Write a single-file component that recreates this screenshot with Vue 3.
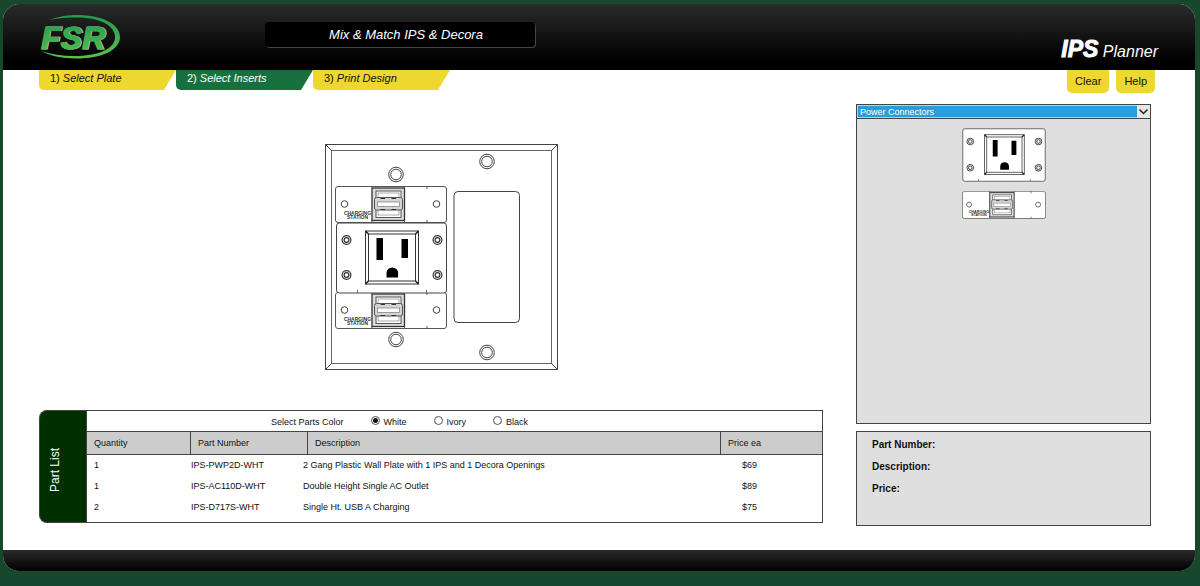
<script setup>
import { ref } from 'vue'

const steps = [
  { number: '1)', label: 'Select Plate' },
  { number: '2)', label: 'Select Inserts' },
  { number: '3)', label: 'Print Design' },
]
const activeStep = ref(1)

const colors = ['White', 'Ivory', 'Black']
const color = ref('White')

const category = ref('Power Connectors')

const parts = [
  { qty: 1, number: 'IPS-PWP2D-WHT', description: '2 Gang Plastic Wall Plate with 1 IPS and 1 Decora Openings', price: '$69' },
  { qty: 1, number: 'IPS-AC110D-WHT', description: 'Double Height Single AC Outlet', price: '$89' },
  { qty: 2, number: 'IPS-D717S-WHT', description: 'Single Ht. USB A Charging', price: '$75' },
]

const plateScrews = [
  [396, 174.5],
  [487, 161.5],
  [396, 339.5],
  [487, 352.5],
]
const outletScrews = [
  [11, 18],
  [102, 18],
  [11, 53],
  [102, 53],
]
</script>

<template>
  <div class="shell">
    <!-- shared line drawings of the inserts -->
    <svg class="defs" aria-hidden="true">
      <defs>
        <symbol id="outlet" viewBox="0 0 112 72">
          <rect x="1" y="1" width="110" height="70" rx="3" fill="#fff" stroke="#444" />
          <g v-for="([x, y], i) in outletScrews" :key="i" fill="none" stroke="#333" stroke-width="1.200">
            <circle :cx="x" :cy="y" r="4.400" />
            <circle :cx="x" :cy="y" r="2.400" />
          </g>
          <rect x="30" y="9" width="53" height="53" fill="none" stroke="#333" />
          <rect x="33" y="12" width="47" height="47" fill="none" stroke="#333" />
          <path d="M30 9l3 3M83 9l-3 3M30 62l3-3M83 62l-3-3" stroke="#222" stroke-width="1.600" />
          <rect x="41" y="16" width="6.500" height="22" />
          <rect x="66" y="17" width="6.500" height="19" />
          <path d="M51 55.500v-4.500a5.800 5.500 0 0 1 11.600 0v4.500z" />
          <path d="M22 68v3M91 68v3" stroke="#666" />
        </symbol>
        <symbol id="usb" viewBox="0 0 112 37">
          <rect x=".5" y=".5" width="111" height="36" rx="2.500" fill="#fff" stroke="#555" />
          <circle cx="9.500" cy="18" r="3.300" fill="none" stroke="#444" />
          <circle cx="101.500" cy="18" r="3.300" fill="none" stroke="#444" />
          <rect x="37" y="2" width="32.500" height="32.500" fill="#ddd" stroke="#333" stroke-width="1.300" />
          <rect x="41" y="5" width="25" height="26.500" fill="#fff" stroke="#555" />
          <rect x="43" y="7" width="21" height="22" fill="#fff" stroke="#888" stroke-width=".700" />
          <rect x="39.500" y="11.500" width="28" height="12.500" rx="2" fill="#d4d4d4" stroke="#555" />
          <rect x="42.500" y="16" width="22" height="4.500" fill="#fff" stroke="#888" stroke-width=".800" />
          <path d="M45.500 12.500h4.500M56.500 12.500h4.500M45.500 23.500h4.500M56.500 23.500h4.500" stroke="#333" />
          <path d="M92 0v3M92 34v3M37 0v2M69.500 0v2M37 34v3M69.500 34v3" stroke="#555" />
          <text x="22.500" y="28.500" class="engraving">CHARGING</text>
          <text x="22.500" y="33" class="engraving">STATION</text>
        </symbol>
      </defs>
    </svg>

    <header class="header">
      <svg class="logo" viewBox="38 14 84 46" role="img" aria-label="FSR">
        <defs>
          <linearGradient id="brand" x1="0" y1="0" x2="0" y2="1">
            <stop offset="0" stop-color="#229b50" />
            <stop offset="1" stop-color="#5dbd4b" />
          </linearGradient>
        </defs>
        <path
          fill="url(#brand)"
          d="M49 20C60 16 69 15 77 15C102 15 120 24 120 37C120 50 102 58.500 76 58.500C61 58.500 49 55.500 41 51C52 54.500 62 56 74 56C98 56 115 49 115 37C115 25 99 17.500 76 17.500C67 17.500 58 18 49 20Z"
        />
        <text x="42" y="49" class="logo-shadow">FSR</text>
        <text x="41" y="49" class="logo-text">FSR</text>
      </svg>
      <div class="title">Mix &amp; Match IPS &amp; Decora</div>
      <div class="product"><strong>IPS</strong> Planner</div>
    </header>

    <main class="main">
      <div class="toolbar">
        <nav class="steps">
          <button
            v-for="(step, i) in steps"
            :key="step.label"
            type="button"
            class="step"
            :class="{ active: i === activeStep }"
            @click="activeStep = i"
          >{{ step.number }} <em>{{ step.label }}</em></button>
        </nav>
        <div class="actions">
          <button type="button" class="action">Clear</button>
          <button type="button" class="action">Help</button>
        </div>
      </div>

      <div class="content">
        <section class="design">
          <div class="canvas">
            <svg class="plate" viewBox="325 143 234 228" role="img" aria-label="Wall plate">
              <g fill="none" stroke="#444">
                <rect x="325.500" y="144.500" width="232" height="225" />
                <rect x="331.500" y="150.500" width="220" height="213" stroke="#666" />
                <path d="M325.500 144.500l6 6M557.500 144.500l-6 6M325.500 369.500l6-6M557.500 369.500l-6-6" />
                <rect x="454" y="191.500" width="65.500" height="131" rx="4" />
                <g v-for="([x, y], i) in plateScrews" :key="i">
                  <circle :cx="x" :cy="y" r="7.300" />
                  <circle :cx="x" :cy="y" r="5.300" />
                </g>
              </g>
              <use href="#usb" x="335" y="186" width="112" height="37" />
              <use href="#usb" x="335" y="292" width="112" height="37" />
              <use href="#outlet" x="335.500" y="222" width="112" height="72" />
            </svg>
          </div>

          <div class="part-list">
            <h2 class="part-list-name"><span>Part List</span></h2>
            <div class="part-list-body">
              <div class="colors" role="radiogroup" aria-labelledby="colors-name">
                <span id="colors-name">Select Parts Color</span>
                <label v-for="c in colors" :key="c">
                  <input v-model="color" type="radio" name="color" :value="c" />{{ c }}
                </label>
              </div>
              <table>
                <thead>
                  <tr>
                    <th scope="col">Quantity</th>
                    <th scope="col">Part Number</th>
                    <th scope="col">Description</th>
                    <th scope="col">Price ea</th>
                  </tr>
                </thead>
                <tbody>
                  <tr v-for="part in parts" :key="part.number">
                    <td>{{ part.qty }}</td>
                    <td>{{ part.number }}</td>
                    <td>{{ part.description }}</td>
                    <td>{{ part.price }}</td>
                  </tr>
                </tbody>
              </table>
            </div>
          </div>
        </section>

        <aside class="side">
          <section class="catalog">
            <div class="picker">
              <select v-model="category" aria-label="Insert category">
                <option>Power Connectors</option>
              </select>
              <svg class="arrow" viewBox="0 0 13 12" aria-hidden="true">
                <path d="M2.500 4l4 4L10.500 4" fill="none" stroke="#222" stroke-width="1.500" />
              </svg>
            </div>
            <div class="inserts">
              <button type="button" class="insert" aria-label="Double Height Single AC Outlet">
                <svg class="insert-tall" viewBox="0 0 112 72"><use href="#outlet" /></svg>
              </button>
              <button type="button" class="insert" aria-label="Single Ht. USB A Charging">
                <svg class="insert-short" viewBox="0 0 112 37"><use href="#usb" /></svg>
              </button>
            </div>
          </section>
          <section class="info">
            <p>Part Number:</p>
            <p>Description:</p>
            <p>Price:</p>
          </section>
        </aside>
      </div>
    </main>

    <footer class="footer"></footer>
  </div>
</template>

<style>
body {
  background: #17472d;
}
</style>

<style scoped>
.shell {
  margin: 4px 5px 15px 3px;
  border-radius: 16px;
  overflow: hidden;
  background: #fff;
  color: #111;
  font-family: "Liberation Sans", Arial, sans-serif;
  font-size: 9px;
}

.defs {
  display: block;
  width: 0;
  height: 0;
}

.engraving {
  font: bold 5px "Liberation Sans", Arial, sans-serif;
  text-anchor: middle;
  fill: #333;
}

button {
  border: 0;
  padding: 0;
  font: inherit;
  color: inherit;
  cursor: pointer;
}

/* Header */
.header {
  display: flex;
  align-items: flex-start;
  height: 66px;
  box-sizing: border-box;
  padding: 10px 37px 0 35px;
  background: linear-gradient(#2b2b2b, #000 85%);
  color: #fff;
}

.logo {
  width: 84px;
  height: 46px;
}

.logo-text,
.logo-shadow {
  font: italic bold 32px "Liberation Sans", Arial, sans-serif;
  fill: url(#brand);
  stroke: url(#brand);
  stroke-width: 1.2px;
}

.logo-shadow {
  fill: #b9c4b9;
  stroke: #b9c4b9;
}

.title {
  width: 270px;
  margin: 8px auto 0 143px;
  border-radius: 4px;
  background: #000;
  box-shadow: 1px 1px 0 #444;
  font-size: 13px;
  font-style: italic;
  line-height: 25px;
  text-align: center;
  text-indent: 12px;
}

.product {
  padding-top: 21px;
  font-size: 16px;
  font-style: italic;
  line-height: 28px;
}

.product strong {
  font-size: 23px;
  -webkit-text-stroke: 1px #fff;
}

/* Steps and actions */
.toolbar {
  display: flex;
  justify-content: space-between;
  align-items: flex-start;
  height: 34px;
  padding: 0 40px 0 36px;
  font-size: 11px;
}

.steps {
  display: flex;
}

.step {
  width: 137px;
  height: 20px;
  padding: 0 0 4px 11px;
  border-radius: 0 0 0 5px;
  background: #eed72f;
  clip-path: polygon(0 0, 100% 0, calc(100% - 12px) 100%, 0 100%);
  text-align: left;
}

.step.active {
  background: #17713f;
  color: #fff;
}

.actions {
  display: flex;
  gap: 7px;
}

.action {
  height: 23px;
  padding: 0 8px 2px;
  border-radius: 0 0 5px 5px;
  background: #eed72f;
}

/* Content */
.content {
  display: grid;
  grid-template-columns: 1fr 295px;
  column-gap: 33px;
  align-items: start;
  padding: 0 44px 24px 36px;
}

.canvas {
  display: flex;
  justify-content: center;
  padding: 39px 0 39px 21px;
}

.plate {
  width: 234px;
  height: 228px;
}

/* Part list */
.part-list {
  display: flex;
}

.part-list-name {
  display: flex;
  align-items: center;
  justify-content: center;
  width: 47px;
  margin: 0;
  padding-top: 8px;
  border: 1px solid #444;
  border-right: 0;
  border-radius: 8px 0 0 8px;
  box-sizing: border-box;
  background: #003000;
  color: #fff;
  font-size: 12px;
  font-weight: normal;
}

.part-list-name span {
  padding-left: 16px;
  writing-mode: vertical-rl;
  transform: rotate(180deg);
}

.part-list-body {
  flex: 1;
  border: 1px solid #444;
}

.colors {
  display: flex;
  align-items: center;
  gap: 27px;
  height: 20px;
  box-sizing: border-box;
  padding: 2px 0 0 184px;
  line-height: 20px;
}

.colors label {
  display: flex;
  align-items: center;
}

.colors input {
  appearance: none;
  width: 9px;
  height: 9px;
  margin: 0 4px 3px 0;
  border: 1px solid #555;
  border-radius: 50%;
  background: #fff;
}

.colors input:checked {
  background: radial-gradient(circle, #111 2px, #fff 3px);
}

table,
thead,
tbody {
  display: block;
}

tr {
  display: grid;
}

thead tr {
  grid-template-columns: 103px 117px 1fr 102px;
  border: solid #444;
  border-width: 1px 0;
  background: #ccc;
}

th {
  padding: 1px 0 0 7px;
  border-left: 1px solid #444;
  font-weight: normal;
  line-height: 21px;
  text-align: left;
}

th:first-child {
  border-left: 0;
}

tbody {
  padding-bottom: 4px;
}

tbody tr {
  grid-template-columns: 103px 112px 1fr 102px;
}

td {
  padding: 0 0 0 1px;
  line-height: 21px;
}

td:first-child {
  padding-left: 7px;
}

td:last-child {
  padding-left: 22px;
}

/* Catalog and details */
.side {
  display: grid;
  gap: 7px;
}

.catalog,
.info {
  border: 1px solid #444;
  background: #dfdfdf;
}

.catalog {
  min-height: 318px;
}

.picker {
  position: relative;
  border-bottom: 1px solid #444;
}

.picker select {
  display: block;
  appearance: none;
  width: 100%;
  height: 13px;
  padding: 0 14px 0 2px;
  border: 1px solid #ccc;
  border-radius: 0;
  background: #289fdc;
  color: #fff;
  font: inherit;
}

.arrow {
  position: absolute;
  top: 0;
  right: 0;
  width: 13px;
  height: 13px;
  background: #e6e6e6;
  pointer-events: none;
}

.inserts {
  display: flex;
  flex-direction: column;
  align-items: center;
  gap: 9px;
  padding-top: 9px;
}

.insert {
  display: block;
  background: none;
}

.insert svg {
  display: block;
  width: 84px;
}

.insert-tall {
  height: 54px;
}

.insert-short {
  height: 28px;
}

.info {
  min-height: 86px;
  padding: 2px 15px 5px;
  font-size: 10px;
  font-weight: bold;
  line-height: 22px;
}

.info p {
  margin: 0;
}

/* Footer */
.footer {
  height: 21px;
  background: linear-gradient(#2b2b2b, #000);
}
</style>
